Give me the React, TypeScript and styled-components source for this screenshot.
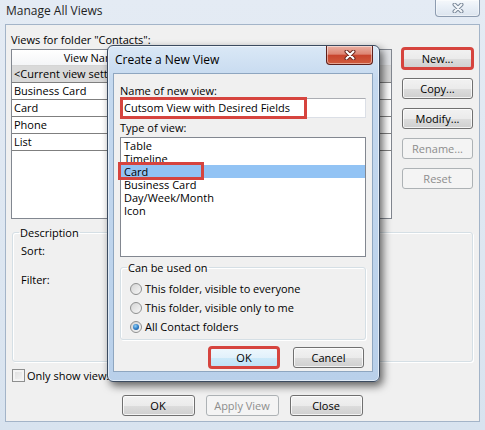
import styled, { createGlobalStyle } from 'styled-components';

const GlobalStyle = createGlobalStyle`
  html, body {
    margin: 0;
    padding: 0;
    background: #dae4f0;
  }
  body {
    font-family: 'Open Sans', 'Noto Sans', sans-serif;
    font-size: 11px;
    color: #000;
  }
  * {
    box-sizing: border-box;
  }
`;

const RED = '#d6443e';

const Window = styled.div`
  position: relative;
  width: 485px;
  height: 430px;
  display: flex;
  flex-direction: column;
  background: linear-gradient(180deg, #e4ebf4 0%, #d8e3ef 100%);
  overflow: hidden;
`;

const TitleBar = styled.div`
  height: 24px;
  display: flex;
  justify-content: space-between;
  align-items: flex-start;
  padding: 0 5px 0 6px;
`;

const TitleText = styled.span`
  padding-top: 4px;
  font-size: 12px;
  line-height: 14px;
  color: #1f1f1f;
`;

const CloseButton = styled.div<{ $active?: boolean }>`
  display: flex;
  align-items: center;
  justify-content: center;
  width: ${({ $active }) => ($active ? '47px' : '45px')};
  height: ${({ $active }) => ($active ? '19px' : '17px')};
  border: 1px solid ${({ $active }) => ($active ? '#5e1f1a' : '#8d9cb0')};
  border-top: none;
  border-radius: 0 0 4px 4px;
  background: ${({ $active }) =>
    $active
      ? 'linear-gradient(180deg, #eab0a3 0%, #dd8573 45%, #c8452e 52%, #d05c3e 100%)'
      : 'linear-gradient(180deg, #f5f8fb 0%, #e7eef6 50%, #dbe4ee 100%)'};
  box-shadow: inset 0 0 0 1px rgba(255, 255, 255, 0.45);
`;

const CloseGlyph = ({ fill, edge }: { fill: string; edge: string }) => (
  <svg width="12" height="10" viewBox="0 0 12 10">
    <path d="M2.5 1.5 L9.5 8.5 M9.5 1.5 L2.5 8.5" stroke={edge} strokeWidth="4" strokeLinecap="round" />
    <path d="M2.5 1.5 L9.5 8.5 M9.5 1.5 L2.5 8.5" stroke={fill} strokeWidth="2" strokeLinecap="round" />
  </svg>
);

const Client = styled.div`
  flex: 1;
  margin: 0 5px 8px;
  padding: 0 6px 0 5px;
  display: flex;
  flex-direction: column;
  background: #f0f0f0;
  border: 1px solid #a3b4c8;
`;

const Label = styled.div<{ $top?: number }>`
  margin-top: ${({ $top }) => $top ?? 0}px;
  line-height: 13px;
  white-space: nowrap;
`;

const TopRow = styled.div`
  display: flex;
  margin-top: 3px;
  height: 170px;
`;

const ViewTable = styled.div`
  flex: 1;
  display: flex;
  flex-direction: column;
  background: #fff;
  border: 1px solid #828790;
`;

const HeaderRow = styled.div`
  display: flex;
  height: 16px;
  border-bottom: 1px solid #d5d5d5;
  background: linear-gradient(180deg, #ffffff 0%, #f4f5f7 100%);
`;

const HeaderCell = styled.div<{ $width?: number; $shade?: boolean }>`
  width: ${({ $width }) => ($width ? `${$width}px` : 'auto')};
  flex: ${({ $width }) => ($width ? 'none' : 1)};
  text-align: center;
  line-height: 15px;
  border-right: 1px solid #e3e5e8;
  background: ${({ $shade }) => ($shade ? '#e4e6ea' : 'transparent')};
  white-space: nowrap;
  overflow: hidden;
`;

const TableRow = styled.div<{ $selected?: boolean }>`
  height: 17px;
  line-height: 16px;
  padding-left: 2px;
  border-bottom: 1px solid #7f7f7f;
  background: ${({ $selected }) => ($selected ? '#d9d9d9' : '#fff')};
  white-space: nowrap;
`;

const SideButtons = styled.div`
  width: 71px;
  margin: -1px 0 0 10px;
  display: flex;
  flex-direction: column;
  gap: 9px;
`;

const Button = styled.button<{ $width?: number; $default?: boolean; $mark?: boolean }>`
  width: ${({ $width }) => ($width ? `${$width}px` : '100%')};
  height: 21px;
  padding: 0;
  font-family: inherit;
  font-size: 11px;
  line-height: 19px;
  color: #000;
  border-radius: 3px;
  border: 1px solid ${({ $default }) => ($default ? '#3c7fb1' : '#707070')};
  background: ${({ $default }) =>
    $default
      ? 'linear-gradient(180deg, #eef7fd 0%, #e2f1fb 50%, #cde9f9 51%, #bfe1f6 100%)'
      : 'linear-gradient(180deg, #f2f2f2 0%, #ebebeb 50%, #dddddd 51%, #cfcfcf 100%)'};
  box-shadow: inset 0 0 0 1px rgba(255, 255, 255, 0.75);
  outline: ${({ $mark }) => ($mark ? `3px solid ${RED}` : 'none')};
  outline-offset: -2px;

  &:disabled {
    color: #8d8d8d;
    border-color: #adb2b5;
    background: #f4f4f4;
    box-shadow: none;
  }
`;

const Group = styled.fieldset<{ $height: number; $top: number; $left?: number }>`
  margin: ${({ $top }) => $top}px 0 0 ${({ $left }) => $left ?? 0}px;
  padding: 0 8px;
  height: ${({ $height }) => $height}px;
  min-width: 0;
  border: 1px solid #d5dfe5;
  border-radius: 3px;
  box-shadow: inset 1px 1px 0 #fff, 1px 1px 0 #fff;
`;

const Legend = styled.legend`
  margin-left: -2px;
  padding: 0 1px;
  line-height: 13px;
`;

const DescLine = styled.div<{ $top: number }>`
  margin: ${({ $top }) => $top}px 0 0 0;
  line-height: 13px;
`;

const CheckRow = styled.label`
  display: flex;
  align-items: center;
  gap: 2px;
  margin: 7px 0 0 1px;
  height: 13px;
  line-height: 13px;
`;

const CheckBox = styled.span`
  width: 13px;
  height: 13px;
  border: 1px solid #8e8f8f;
  background: linear-gradient(135deg, #dcdcdc 0%, #f6f6f6 100%);
  box-shadow: inset 0 0 0 2px #f4f4f4;
`;

const BottomButtons = styled.div`
  display: flex;
  justify-content: center;
  gap: 11px;
  margin-top: 13px;
`;

/* the "Create a New View" dialog, lying over the main window */
const Dialog = styled.div`
  position: absolute;
  left: 107px;
  top: 45px;
  width: 273px;
  height: 337px;
  display: flex;
  flex-direction: column;
  border: 1px solid #3b4b60;
  border-radius: 6px;
  background: linear-gradient(180deg, #dae8f6 0%, #c5d9ef 10%, #b9d0ea 100%);
  box-shadow: 3px 4px 8px rgba(0, 0, 0, 0.6), inset 0 0 0 1px rgba(255, 255, 255, 0.55);
`;

const DialogTitle = styled.div`
  height: 27px;
  display: flex;
  justify-content: space-between;
  align-items: flex-start;
  padding: 0 6px 0 7px;
`;

const DialogTitleText = styled.span`
  padding-top: 7px;
  font-size: 12px;
  line-height: 14px;
  color: #000;
`;

const DialogClient = styled.div`
  flex: 1;
  margin: 0 6px 9px 5px;
  padding: 0 6px;
  display: flex;
  flex-direction: column;
  background: #f0f0f0;
  border: 1px solid #8ea6c0;
`;

const Field = styled.div`
  position: relative;
  height: 20px;
  margin-top: 1px;
  padding-left: 3px;
  line-height: 18px;
  background: #fff;
  border: 1px solid #dbdfe6;
  border-top-color: #abadb3;
  white-space: nowrap;
`;

const Mark = styled.span<{ $l: number; $t: number; $w: number; $h: number }>`
  position: absolute;
  left: ${({ $l }) => $l}px;
  top: ${({ $t }) => $t}px;
  width: ${({ $w }) => $w}px;
  height: ${({ $h }) => $h}px;
  border: 3px solid ${RED};
  pointer-events: none;
`;

const ListBox = styled.div`
  height: 120px;
  margin-top: 3px;
  padding: 1px 0;
  background: #fff;
  border: 1px solid #828790;
`;

const ListItem = styled.div<{ $selected?: boolean }>`
  position: relative;
  height: 13px;
  line-height: 13px;
  padding-left: 3px;
  background: ${({ $selected }) => ($selected ? '#92c3f4' : 'transparent')};
`;

const RadioRow = styled.label<{ $top: number }>`
  display: flex;
  align-items: center;
  gap: 3px;
  margin: ${({ $top }) => $top}px 0 0 1px;
  height: 13px;
  line-height: 13px;
`;

const Radio = styled.span<{ $checked?: boolean }>`
  position: relative;
  width: 12px;
  height: 12px;
  border-radius: 50%;
  border: 1px solid #8e8f8f;
  background: linear-gradient(135deg, #d4d4d4 0%, #f7f7f7 100%);

  &::after {
    content: '';
    display: ${({ $checked }) => ($checked ? 'block' : 'none')};
    position: absolute;
    left: 2px;
    top: 2px;
    width: 6px;
    height: 6px;
    border-radius: 50%;
    background: radial-gradient(circle at 40% 35%, #8fd0f7 0%, #2b78c2 55%, #124f91 100%);
  }
`;

const DialogButtons = styled.div`
  display: flex;
  justify-content: flex-end;
  gap: 14px;
  margin-top: 7px;
  padding-right: 2px;
`;

const tableRows = ['<Current view settings>', 'Business Card', 'Card', 'Phone', 'List'];
const sideButtons = [
  { label: 'New...', mark: true },
  { label: 'Copy...' },
  { label: 'Modify...' },
  { label: 'Rename...', disabled: true },
  { label: 'Reset', disabled: true },
];
const viewTypes = ['Table', 'Timeline', 'Card', 'Business Card', 'Day/Week/Month', 'Icon'];
const usedOn = ['This folder, visible to everyone', 'This folder, visible only to me', 'All Contact folders'];

export default function App() {
  return (
    <>
      <GlobalStyle />
      <Window>
        <TitleBar>
          <TitleText>Manage All Views</TitleText>
          <CloseButton>
            <CloseGlyph fill="#f4f7fa" edge="#7d8a9b" />
          </CloseButton>
        </TitleBar>
        <Client>
          <Label $top={8}>Views for folder "Contacts":</Label>
          <TopRow>
            <ViewTable>
              <HeaderRow>
                <HeaderCell $width={162}>View Name</HeaderCell>
                <HeaderCell $width={130}>Can Be Used On</HeaderCell>
                <HeaderCell $shade>View Type</HeaderCell>
              </HeaderRow>
              {tableRows.map((row, i) => (
                <TableRow key={row} $selected={i === 0}>
                  {row}
                </TableRow>
              ))}
            </ViewTable>
            <SideButtons>
              {sideButtons.map(({ label, mark, disabled }) => (
                <Button key={label} $mark={mark} disabled={disabled}>
                  {label}
                </Button>
              ))}
            </SideButtons>
          </TopRow>
          <Group $height={136} $top={7} $left={1}>
            <Legend>Description</Legend>
            <DescLine $top={5}>Sort:</DescLine>
            <DescLine $top={16}>Filter:</DescLine>
          </Group>
          <CheckRow>
            <CheckBox />
            Only show views created for this folder
          </CheckRow>
          <BottomButtons>
            <Button $width={73}>OK</Button>
            <Button $width={73} disabled>
              Apply View
            </Button>
            <Button $width={73}>Close</Button>
          </BottomButtons>
        </Client>

        <Dialog>
          <DialogTitle>
            <DialogTitleText>Create a New View</DialogTitleText>
            <CloseButton $active>
              <CloseGlyph fill="#ffffff" edge="#6b2a22" />
            </CloseButton>
          </DialogTitle>
          <DialogClient>
            <Label $top={10}>Name of new view:</Label>
            <Field>
              Cutsom View with Desired Fields
              <Mark $l={-1} $t={-2} $w={187} $h={22} />
            </Field>
            <Label $top={3}>Type of view:</Label>
            <ListBox>
              {viewTypes.map((type) => (
                <ListItem key={type} $selected={type === 'Card'}>
                  {type}
                  {type === 'Card' && <Mark $l={-3} $t={-3} $w={86} $h={18} />}
                </ListItem>
              ))}
            </ListBox>
            <Group $height={79} $top={4}>
              <Legend>Can be used on</Legend>
              {usedOn.map((opt, i) => (
                <RadioRow key={opt} $top={i === 0 ? 8 : 6}>
                  <Radio $checked={i === 2} />
                  {opt}
                </RadioRow>
              ))}
            </Group>
            <DialogButtons>
              <Button $width={70} $default $mark>
                OK
              </Button>
              <Button $width={71}>Cancel</Button>
            </DialogButtons>
          </DialogClient>
        </Dialog>
      </Window>
    </>
  );
}
